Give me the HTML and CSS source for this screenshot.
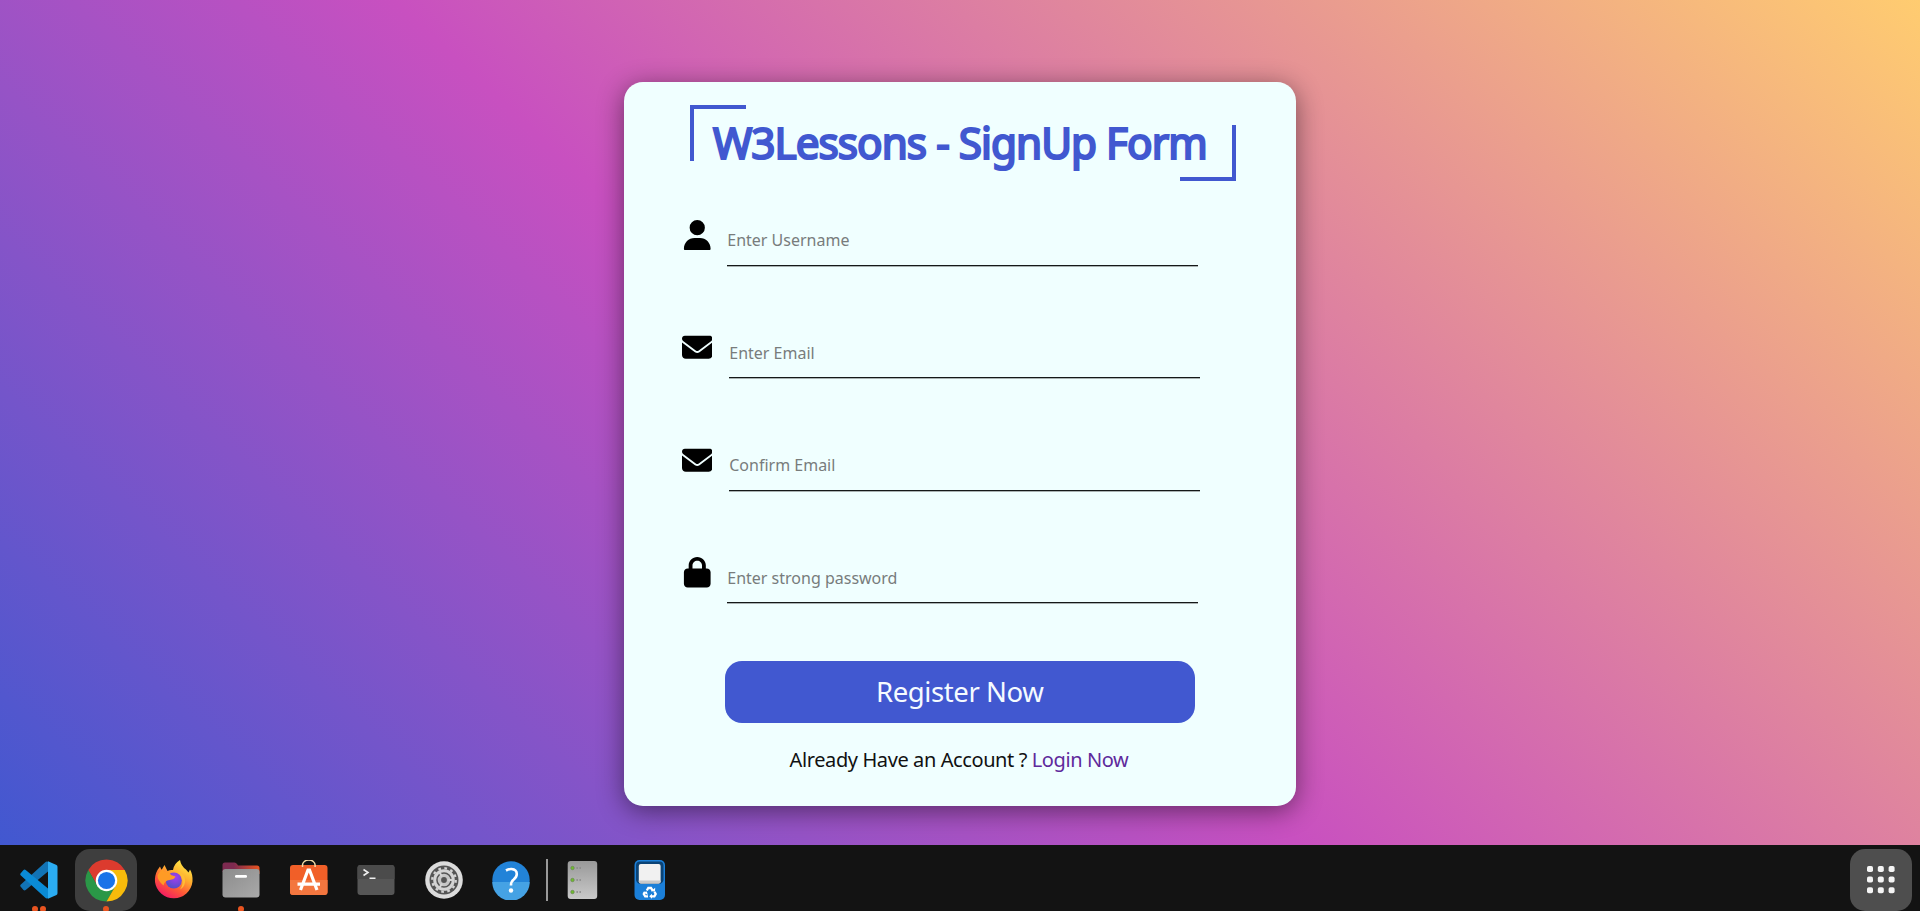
FILE: index.html
```html
<!DOCTYPE html>
<html lang="en">
<head>
<meta charset="utf-8">
<title>W3Lessons - SignUp Form</title>
<link rel="stylesheet" href="styles.css">
</head>
<body>
<main class="page">
  <form class="card">
    <h1 class="title"><span class="title-text">W3Lessons - SignUp Form</span></h1>
    <div class="fields">
      <label class="field">
        <svg class="icon" viewBox="-32 0 512 512"><path d="M224 256A128 128 0 1 0 224 0a128 128 0 1 0 0 256zm-45.700 48C79.800 304 0 383.800 0 482.300C0 498.700 13.300 512 29.700 512H418.300c16.400 0 29.700-13.300 29.700-29.700C448 383.800 368.200 304 269.700 304H178.300z"/></svg>
        <input class="input" type="text" placeholder="Enter Username">
      </label>
      <label class="field field-wide">
        <svg class="icon" viewBox="0 0 512 512"><path d="M48 64C21.500 64 0 85.500 0 112c0 15.100 7.100 29.300 19.200 38.400L236.800 313.600c11.400 8.500 27 8.500 38.400 0L492.800 150.400c12.100-9.100 19.200-23.300 19.200-38.400c0-26.500-21.500-48-48-48H48zM0 176V384c0 35.300 28.700 64 64 64H448c35.300 0 64-28.700 64-64V176L294.400 339.200c-22.800 17.100-54 17.100-76.800 0L0 176z"/></svg>
        <input class="input" type="email" placeholder="Enter Email">
      </label>
      <label class="field field-wide">
        <svg class="icon" viewBox="0 0 512 512"><path d="M48 64C21.500 64 0 85.500 0 112c0 15.100 7.100 29.300 19.200 38.400L236.800 313.600c11.400 8.500 27 8.500 38.400 0L492.800 150.400c12.100-9.100 19.200-23.300 19.200-38.400c0-26.500-21.500-48-48-48H48zM0 176V384c0 35.300 28.700 64 64 64H448c35.300 0 64-28.700 64-64V176L294.400 339.200c-22.800 17.100-54 17.100-76.800 0L0 176z"/></svg>
        <input class="input" type="email" placeholder="Confirm Email">
      </label>
      <label class="field">
        <svg class="icon" viewBox="-32 0 512 512"><path d="M144 144v48H304V144c0-44.200-35.800-80-80-80s-80 35.800-80 80zM80 192V144C80 64.500 144.500 0 224 0s144 64.500 144 144v48h16c35.300 0 64 28.700 64 64V448c0 35.300-28.700 64-64 64H64c-35.300 0-64-28.700-64-64V256c0-35.300 28.700-64 64-64H80z"/></svg>
        <input class="input" type="password" placeholder="Enter strong password">
      </label>
    </div>
    <button class="submit" type="button">Register Now</button>
    <p class="login">Already Have an Account ? <a class="login-link" href="#">Login Now</a></p>
  </form>
</main>
<nav class="dock">
  <div class="slot">
    <svg class="app" viewBox="0 0 40 40">
      <path fill="#1273b5" d="M1.500 26.500 4.500 30q1 .8 2.200 0L29 11.500V1.800Q27.500 1 26 2.500L1.600 24.800q-.8.900-.1 1.700z"/>
      <path fill="#0a8bd6" d="M1.500 13.500 4.500 10q1-.8 2.200 0L29 28.500v9.700q-1.500.8-3-.7L1.600 15.200q-.8-.9-.1-1.700z"/>
      <path fill="#2bacf2" d="M29 1.200 37.500 5q1 .6 1 2v26q0 1.400-1 2L29 38.800z"/>
    </svg>
    <span class="dots"><i class="dot"></i><i class="dot"></i></span>
  </div>
  <div class="slot">
    <div class="tile tile-active">
      <svg class="chrome" viewBox="0 0 44 44">
        <path fill="#dc3b2e" d="M3.380 11.250A21.500 21.500 0 0 1 40.620 11.250H22L12.700 27.400z"/>
        <path fill="#2a9747" d="M3.380 11.250A21.500 21.500 0 0 0 22 43.500L31.300 27.400 22 31 12.700 27.400z"/>
        <path fill="#f8bb0b" d="M40.620 11.250A21.500 21.500 0 0 1 22 43.500L31.300 27.400 32.700 22 22 11.250z"/>
        <circle cx="22" cy="22" r="11" fill="#fff"/><circle cx="22" cy="22" r="8.800" fill="#1a73e8"/>
      </svg>
    </div>
    <span class="dots"><i class="dot"></i></span>
  </div>
  <div class="slot">
    <svg class="app" viewBox="0 0 40 40">
      <defs>
        <linearGradient id="fox" x1=".8" y1="0" x2=".2" y2="1"><stop offset="0" stop-color="#fff04a"/><stop offset=".35" stop-color="#ffb02e"/><stop offset=".65" stop-color="#ff5a36"/><stop offset="1" stop-color="#f1106c"/></linearGradient>
        <radialGradient id="globe" cx=".6" cy=".3" r=".8"><stop offset="0" stop-color="#a43ef0"/><stop offset="1" stop-color="#4a50c0"/></radialGradient>
      </defs>
      <path fill="url(#fox)" d="M3.500 10 6 6.500 7.500 10 10.500 5l3 6Q16 9.500 19 10 20 3.500 26 0q1 6 6 9.500l2.500 3 1.500-3q3 5 2.500 12A18.900 18.900 0 0 1 1 22Q.5 15.500 3.500 10z"/>
      <circle cx="19.800" cy="20.500" r="8" fill="url(#globe)"/>
      <path fill="#ff9b25" d="M3.500 15 8 9l3 3 3.500-1 2.500 4 4.500 1.500q-1 3-6 3.500-5 .5-6 5.500Q3 20 3.500 15z"/>
      <path fill="#ffbd35" d="M24 11.500q8 3 7 11-1 5-5 7 4-5 2-11-1-4-4-7z"/>
    </svg>
  </div>
  <div class="slot">
    <svg class="app" viewBox="0 0 40 40">
      <defs><linearGradient id="tab"><stop offset=".3" stop-color="#7d2a50"/><stop offset="1" stop-color="#e95420"/></linearGradient>
      <linearGradient id="folder" x2="1" y2="1"><stop offset="0" stop-color="#8c8c8c"/><stop offset="1" stop-color="#a9a9a9"/></linearGradient></defs>
      <path fill="url(#tab)" d="M1.500 12V5q0-2.500 2.500-2.500h9.500q1.500 0 2.500 1.500l1 1.500h19q2.500 0 2.500 2.500v6z"/>
      <rect x="1.500" y="9" width="37" height="28.500" rx="3" fill="url(#folder)"/>
      <rect x="14" y="15" width="12" height="2.800" rx="1.200" fill="#fff"/>
    </svg>
    <span class="dots"><i class="dot"></i></span>
  </div>
  <div class="slot">
    <svg class="app" viewBox="0 0 40 40">
      <rect x="1" y="5" width="37.500" height="30" rx="3" fill="#f15f28"/><path fill="#f3763f" d="M1 20h37.500v12q0 3-3 3H4q-3 0-3-3z"/>
      <path fill="none" stroke="#f5dca6" stroke-width="1.500" d="M13.500 7V5a6.300 5 0 0 1 12.600 0v2"/>
      <path fill="none" stroke="#fff" stroke-width="3.200" d="M11.500 30 19 10h1.500L28 30M8.500 24.200h22.500"/>
    </svg>
  </div>
  <div class="slot">
    <svg class="app" viewBox="0 0 40 40">
      <rect x="1.500" y="5" width="37" height="30" rx="3" fill="#565656"/><path fill="#4b4b4b" d="M1.500 19V8q0-3 3-3h31q3 0 3 3v11z"/>
      <path fill="none" stroke="#eee" stroke-width="1.600" d="m7.500 9.500 4.500 3-4.500 3M13.500 18.200h6"/>
    </svg>
  </div>
  <div class="slot">
    <svg class="app" viewBox="0 0 40 40">
      <circle cx="20" cy="20" r="18.800" fill="#dcdcdc"/><circle cx="20" cy="20" r="14.500" fill="#555"/>
      <circle cx="20" cy="20" r="11.800" fill="none" stroke="#d4d4d4" stroke-width="2.200" stroke-dasharray="2.700 3.480"/>
      <circle cx="20" cy="20" r="9.300" fill="none" stroke="#d4d4d4" stroke-width="3"/>
      <circle cx="20" cy="20" r="4.600" fill="none" stroke="#c6c6c6" stroke-width="3.400"/>
      <path stroke="#d4d4d4" stroke-width="2" d="M24 20h5M18 23.500l-2.500 4.300M18 16.500l-2.500-4.300"/>
    </svg>
  </div>
  <div class="slot">
    <svg class="app" viewBox="0 0 40 40">
      <circle cx="20" cy="20" r="18.700" fill="#2283d8"/><path fill="#45a2e4" d="M1.300 22h37.400a18.700 18.700 0 0 1-37.400 0z"/>
      <path fill="none" stroke="#fff" stroke-width="2.600" d="M15 10.500q3-1.700 5.500-1.500 5.300.5 5.300 5 0 3-3.100 5.500-2.700 2-2.700 6"/><circle cx="20" cy="30.500" r="2.200" fill="#fff"/>
    </svg>
  </div>
  <span class="divider"></span>
  <div class="slot">
    <svg class="app" viewBox="0 0 40 40">
      <defs><linearGradient id="drive" x2="0" y2="1"><stop offset="0" stop-color="#999"/><stop offset="1" stop-color="#c9c9c9"/></linearGradient></defs>
      <rect x="4.700" y="1" width="29.500" height="38" rx="3" fill="url(#drive)"/>
      <g fill="#6fbf2a" stroke="#698754" stroke-width=".8"><circle cx="9.500" cy="8" r="1.700"/><circle cx="9.500" cy="20" r="1.700"/><circle cx="9.500" cy="32" r="1.700"/></g>
      <path stroke="#888" stroke-width="1.400" stroke-dasharray="1.600 1.400" d="M13.400 8h5M13.400 20h5M13.400 32h5"/>
    </svg>
  </div>
  <div class="slot">
    <svg class="app" viewBox="0 0 40 40">
      <rect x="4.500" y="0" width="30.500" height="40" rx="5" fill="#1b7fd8"/>
      <path fill="#0b4375" d="M6 5.500q0-4 4-4h19.500q4 0 4 4V20q-1 4-5 4H11q-4 0-5-4z"/>
      <rect x="8.800" y="4" width="21.800" height="19.500" rx="2" fill="#f1f1f1"/><path fill="#c9c9c9" d="M8.800 20.500h21.800v1q0 2-2 2H10.800q-2 0-2-2z"/>
      <g fill="none" stroke="#fff" stroke-width="2.300"><path d="m16.800 30.500 1.500-2.500h2.700l1.700 2.700M24.500 31.800l1.200 2.200-1.300 2.300h-3M18 36.300h-2.800l-1.400-2.300 1.200-2"/></g>
      <path fill="#fff" d="m20.800 31.200 4.200.2.200-3.700zM22 33.800v5l-2.800-2.500zM12.700 32l4.200-.4.900 3.500z"/>
    </svg>
  </div>
  <div class="tile tile-apps">
    <svg class="grid" viewBox="0 0 28 28" fill="#f5f5f5"><rect width="6" height="6" rx="1.800"/><rect x="10.800" width="6" height="6" rx="1.800"/><rect x="21.600" width="6" height="6" rx="1.800"/><rect y="10.600" width="6" height="6" rx="1.800"/><rect x="10.800" y="10.600" width="6" height="6" rx="1.800"/><rect x="21.600" y="10.600" width="6" height="6" rx="1.800"/><rect y="21.200" width="6" height="6" rx="1.800"/><rect x="10.800" y="21.200" width="6" height="6" rx="1.800"/><rect x="21.600" y="21.200" width="6" height="6" rx="1.800"/></svg>
  </div>
</nav>
</body>
</html>
```
FILE: styles.css
```css
*, *::before, *::after { box-sizing: border-box; }
body {
  margin: 0;
  height: 911px;
  overflow: hidden;
  display: flex;
  flex-direction: column;
  font-family: "Noto Sans", sans-serif;
}
.page {
  height: 845px;
  display: flex;
  justify-content: center;
  align-items: flex-start;
  padding-top: 81.5px;
  background: linear-gradient(43deg, #4158d0 0%, #c850c0 46%, #ffcc70 100%);
}
.card {
  width: 672.5px;
  height: 724.5px;
  padding: 23px 60px 0 58px;
  border-radius: 19px;
  background: #f0ffff;
  box-shadow: 0 5px 27px rgba(0, 0, 0, .48);
}
.title {
  position: relative;
  width: 546.5px;
  height: 76px;
  margin: 0 0 0 8px;
  padding-left: 23px;
  font-size: 44px;
  font-weight: 400;
  line-height: 74px;
  color: #4158d0;
}
.title-text {
  display: inline-block;
  white-space: nowrap;
  letter-spacing: -1px;
  -webkit-text-stroke: 2.2px #4158d0;
  transform: scaleX(.96);
  transform-origin: left;
}
.title::before, .title::after {
  content: "";
  position: absolute;
  width: 56px;
  height: 56px;
}
.title::before {
  top: 0;
  left: 0;
  border-top: 4px solid #4158d0;
  border-left: 4px solid #4158d0;
}
.title::after {
  right: 0;
  bottom: 0;
  border-right: 4px solid #4158d0;
  border-bottom: 4px solid #4158d0;
}
.fields { padding-top: 39px; }
.field {
  display: flex;
  gap: 15px;
  height: 112.5px;
  align-items: flex-start;
}
.field-wide { gap: 17px; }
.icon {
  width: 30.5px;
  height: 30.5px;
  flex: none;
}
.input {
  width: 471px;
  height: 46px;
  border: 0;
  border-bottom: 1px solid #151818;
  box-shadow: 0 1px #a9b2b2;
  padding: 0 0 4px;
  background: transparent;
  font: 16px "Noto Sans", sans-serif;
  outline: 0;
}
.input::placeholder { color: #787c7c; }
.submit {
  display: block;
  width: 470px;
  height: 62px;
  margin: -9px 0 0 43px;
  padding: 0;
  border: 0;
  border-radius: 17px;
  background: #4158d0;
  color: #f5fbff;
  font: 27.5px/60px "Noto Sans", sans-serif;
  letter-spacing: -.4px;
}
.login {
  margin: 22px 0 0;
  text-align: center;
  font-size: 20px;
  line-height: 30px;
  letter-spacing: -.4px;
  color: #111;
}
.login-link {
  color: #5f2a9c;
  text-decoration: none;
}
.dock {
  height: 66px;
  display: flex;
  padding: 0 8px 0 5px;
  background: #131313;
}
.slot {
  position: relative;
  width: 67.5px;
  height: 66px;
  display: flex;
  justify-content: center;
  align-items: flex-start;
  padding-top: 15px;
}
.app {
  width: 40px;
  height: 40px;
}
.tile {
  width: 62px;
  height: 62px;
  flex: none;
  display: flex;
  justify-content: center;
  align-items: center;
  border-radius: 15px;
}
.tile-active {
  margin-top: -11px;
  background: #3e3e3e;
}
.chrome {
  width: 43px;
  height: 43px;
}
.tile-apps {
  margin: 4px 0 0 auto;
  background: #4e4e4e;
}
.grid {
  width: 28px;
  height: 28px;
}
.dots {
  position: absolute;
  left: 0;
  right: 0;
  bottom: -1px;
  display: flex;
  justify-content: center;
  gap: 2.500px;
}
.dot {
  width: 6px;
  height: 6px;
  border-radius: 50%;
  background: #e95420;
}
.divider {
  width: 2px;
  height: 42px;
  margin: 14px 1px 0;
  background: #999;
}
```
